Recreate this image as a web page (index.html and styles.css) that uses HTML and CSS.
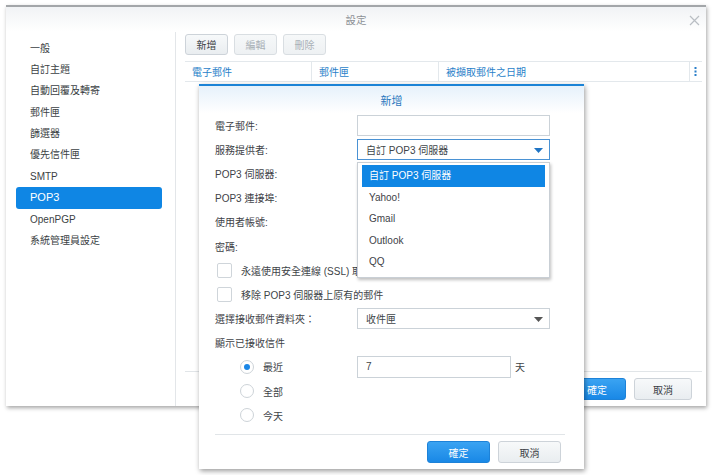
FILE: index.html
```html
<!DOCTYPE html>
<html lang="zh-Hant">
<head>
    <meta charset="UTF-8">
    <title>設定</title>
    <link rel="stylesheet" href="styles.css">
</head>
<body>

<div class="page">
    <div class="window">
        <div class="titlebar">
            <span class="title">設定</span>
            <svg class="close" width="11" height="11" viewBox="0 0 11 11">
                <path d="M1 1 L10 10 M10 1 L1 10" stroke="#b9bec3" stroke-width="1.2" fill="none"/>
            </svg>
        </div>
        <div class="win-body">
            <ul class="sidebar">
                <li>一般</li>
                <li>自訂主題</li>
                <li>自動回覆及轉寄</li>
                <li>郵件匣</li>
                <li>篩選器</li>
                <li>優先信件匣</li>
                <li>SMTP</li>
                <li class="active">POP3</li>
                <li>OpenPGP</li>
                <li>系統管理員設定</li>
            </ul>
            <div class="main">
                <div class="toolbar">
                    <button class="btn">新增</button>
                    <button class="btn disabled">編輯</button>
                    <button class="btn disabled">刪除</button>
                </div>
                <div class="grid-head">
                    <div class="col c1">電子郵件</div>
                    <div class="col c2">郵件匣</div>
                    <div class="col c3">被擷取郵件之日期</div>
                    <div class="col c4">
                        <svg width="3" height="9" viewBox="0 0 3 9">
                            <rect x="0.5" y="0" width="2" height="2" fill="#2a7fc9"/>
                            <rect x="0.5" y="3.5" width="2" height="2" fill="#2a7fc9"/>
                            <rect x="0.5" y="7" width="2" height="2" fill="#2a7fc9"/>
                        </svg>
                    </div>
                </div>
                <div class="grid-body"></div>
                <div class="footer">
                    <button class="btn primary">確定</button>
                    <button class="btn">取消</button>
                </div>
            </div>
        </div>
    </div>

    <div class="dialog">
        <div class="dlg-title">新增</div>
        <div class="form">
            <div class="row">
                <label class="lbl">電子郵件:</label>
                <div class="field"></div>
            </div>
            <div class="row">
                <label class="lbl">服務提供者:</label>
                <div class="field select focus">自訂 POP3 伺服器
                    <svg class="arrow" width="9" height="5" viewBox="0 0 9 5"><path d="M0 0 L9 0 L4.5 5 Z" fill="#1f74c4"/></svg>
                </div>
            </div>
            <div class="row">
                <label class="lbl">POP3 伺服器:</label>
                <div class="field"></div>
            </div>
            <div class="row">
                <label class="lbl">POP3 連接埠:</label>
                <div class="field"></div>
            </div>
            <div class="row">
                <label class="lbl">使用者帳號:</label>
                <div class="field"></div>
            </div>
            <div class="row">
                <label class="lbl">密碼:</label>
                <div class="field"></div>
            </div>
            <div class="row check-row">
                <span class="checkbox"></span>
                <span>永遠使用安全連線 (SSL) 取得郵件</span>
            </div>
            <div class="row check-row">
                <span class="checkbox"></span>
                <span>移除 POP3 伺服器上原有的郵件</span>
            </div>
            <div class="row">
                <label class="lbl">選擇接收郵件資料夾：</label>
                <div class="field select">收件匣
                    <svg class="arrow" width="9" height="5" viewBox="0 0 9 5"><path d="M0 0 L9 0 L4.5 5 Z" fill="#555"/></svg>
                </div>
            </div>
            <div class="row">
                <label class="lbl">顯示已接收信件</label>
            </div>
            <div class="row radio-row">
                <span class="radio checked"></span>
                <span class="radio-lbl">最近</span>
                <div class="field days">7</div>
                <span class="unit">天</span>
            </div>
            <div class="row radio-row">
                <span class="radio"></span>
                <span class="radio-lbl">全部</span>
            </div>
            <div class="row radio-row">
                <span class="radio"></span>
                <span class="radio-lbl">今天</span>
            </div>
        </div>
        <div class="dlg-footer">
            <button class="btn primary">確定</button>
            <button class="btn">取消</button>
        </div>

        <ul class="menu">
            <li class="sel">自訂 POP3 伺服器</li>
            <li>Yahoo!</li>
            <li>Gmail</li>
            <li>Outlook</li>
            <li>QQ</li>
        </ul>
    </div>
</div>

</body>
</html>
```

FILE: styles.css
```css
body {
    margin: 0;
    background: #fff;
    font-family: "Liberation Sans", "Noto Sans CJK TC", sans-serif;
    font-size: 10px;
    color: #404448;
}
.page {
    position: relative;
    width: 720px;
    height: 475px;
    overflow: hidden;
}
ul {
    list-style: none;
    margin: 0;
    padding: 0;
}
.btn {
    font-family: inherit;
    font-size: 10px;
    color: #3c4146;
    height: 21px;
    padding: 0;
    border: 1px solid #cdd3d9;
    border-radius: 3px;
    background: linear-gradient(#f7f9fa, #e9edf0);
}
.btn.disabled {
    color: #a9b0b6;
    background: linear-gradient(#f6f8f9, #eef1f3);
    border-color: #d9dee2;
}
.btn.primary {
    color: #fff;
    border-color: #1d82d8;
    background: linear-gradient(#3aa3f2, #1988e6);
}

/* main settings window */
.window {
    margin: 5px 0 0 6px;
    width: 700px;
    height: 399px;
    border-top: 2px solid #a3a6a9;
    background: #fff;
    box-shadow: 1px 2px 4px rgba(0, 0, 0, 0.35);
    display: flex;
    flex-direction: column;
}
.titlebar {
    height: 25px;
    flex: none;
    display: flex;
    align-items: center;
    justify-content: center;
    position: relative;
    background: linear-gradient(#f1f3f5, #fff);
}
.title {
    color: #8d9196;
    font-size: 10.5px;
}
.close {
    position: absolute;
    right: 6px;
    top: 8px;
}
.win-body {
    flex: 1;
    display: flex;
}
.sidebar {
    width: 169px;
    flex: none;
    border-right: 1px solid #e3e6e9;
    padding-top: 5.5px;
}
.sidebar li {
    height: 21.4px;
    line-height: 21.4px;
    margin: 0 13px 0 10px;
    padding-left: 14px;
    border-radius: 3px;
    color: #3b3f44;
}
.sidebar li.active {
    background: #0f86e4;
    color: #fff;
    font-size: 11px;
}
.main {
    flex: 1;
    display: flex;
    flex-direction: column;
    padding: 0 4px 0 9px;
}
.toolbar {
    display: flex;
    gap: 6px;
    padding-top: 2px;
}
.toolbar .btn {
    width: 43px;
}
.grid-head {
    display: flex;
    margin-top: 6px;
    height: 19px;
    border-top: 1px solid #e3e8ec;
    border-bottom: 1px solid #e3e8ec;
    color: #2a7fc9;
}
.col {
    display: flex;
    align-items: center;
    padding-left: 7px;
    border-right: 1px solid #e3e8ec;
}
.c1, .c2 { width: 119px; }
.c3 { width: 243px; }
.c4 { flex: 1; border-right: none; padding-left: 4px; }
.grid-body {
    flex: 1;
}
.footer {
    border-top: 1px solid #e1e5e8;
    padding: 6px 10px 6px;
    display: flex;
    justify-content: flex-end;
    gap: 8px;
}
.footer .btn {
    width: 58px;
    height: 22px;
}

/* modal dialog */
.dialog {
    position: absolute;
    left: 199px;
    top: 84px;
    width: 385px;
    height: 383px;
    border-top: 2px solid #1b83d6;
    background: #fff;
    box-shadow: 1px 2px 5px rgba(0, 0, 0, 0.4);
    display: flex;
    flex-direction: column;
}
.dlg-title {
    height: 27px;
    flex: none;
    display: flex;
    align-items: center;
    justify-content: center;
    color: #2b78bd;
    font-size: 11px;
    background: linear-gradient(#e6f1fb, #fff);
}
.form {
    flex: 1;
    padding-left: 16px;
}
.row {
    height: 24.2px;
    display: flex;
    align-items: center;
}
.lbl {
    width: 142px;
    flex: none;
    color: #3e4247;
}
.field {
    width: 183px;
    height: 19px;
    border: 1px solid #cbd2d8;
    display: flex;
    align-items: center;
    padding-left: 8px;
    position: relative;
}
.select.focus {
    border-color: #4a92d4;
}
.arrow {
    position: absolute;
    right: 6px;
    top: 8px;
}
.check-row {
    padding-left: 2px;
    gap: 9px;
}
.checkbox {
    width: 13px;
    height: 13px;
    border: 1px solid #cfd5da;
    border-radius: 2px;
    background: #fff;
}
.radio-row {
    padding-left: 25px;
}
.radio {
    width: 12px;
    height: 12px;
    border: 1px solid #cdd3d8;
    border-radius: 50%;
    position: relative;
    flex: none;
}
.radio.checked::after {
    content: "";
    position: absolute;
    left: 3px;
    top: 3px;
    width: 6px;
    height: 6px;
    border-radius: 50%;
    background: #1a86e6;
}
.radio-lbl {
    box-sizing: border-box;
    width: 103px;
    padding-left: 9px;
    flex: none;
}
.field.days {
    width: 144px;
    height: 20px;
}
.unit {
    margin-left: 4px;
}
.dlg-footer {
    margin: 0 19px 0 16px;
    border-top: 1px solid #e1e5e8;
    padding: 6px 4px 6px 0;
    display: flex;
    justify-content: flex-end;
    gap: 8px;
}
.dlg-footer .btn {
    width: 63px;
    height: 22px;
}

/* open dropdown list */
.menu {
    position: absolute;
    left: 158px;
    top: 76px;
    width: 191px;
    height: 112px;
    padding-top: 2px;
    border: 1px solid #c9cfd5;
    background: #fff;
    box-shadow: 1px 2px 3px rgba(0, 0, 0, 0.25);
}
.menu li {
    height: 21.4px;
    line-height: 21.4px;
    margin: 0 4px;
    padding-left: 7px;
    color: #3e4247;
}
.menu li.sel {
    background: #0f86e4;
    color: #fff;
    height: 22px;
    line-height: 22px;
}
```
